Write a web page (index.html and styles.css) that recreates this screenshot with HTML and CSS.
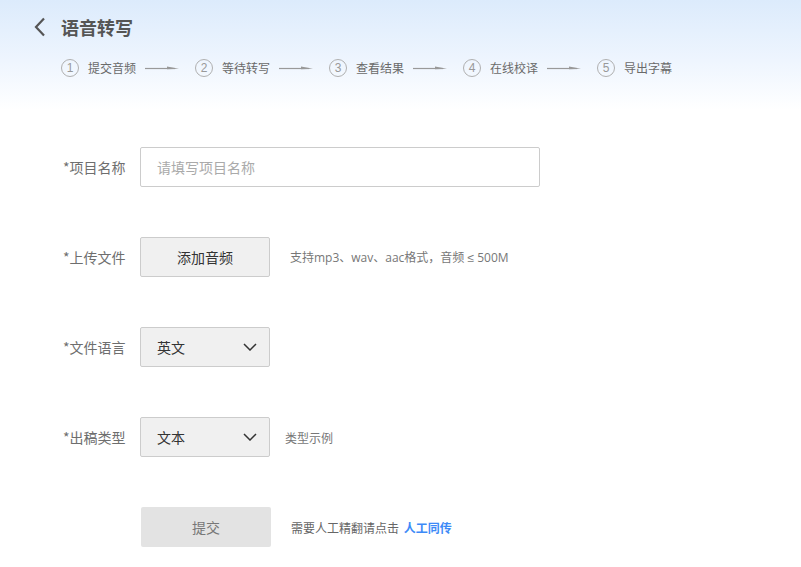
FILE: index.html
```html
<!DOCTYPE html>
<html lang="zh">
<head>
<meta charset="utf-8">
<link rel="stylesheet" href="styles.css">
</head>
<body>
<div class="header">
  <div class="title-row">
    <svg class="back" width="12" height="20" viewBox="0 0 12 20"><polyline points="10,1.5 2,10 10,18.5" fill="none" stroke="#555" stroke-width="2.2"/></svg>
    <h1 class="title">语音转写</h1>
  </div>
  <div class="steps">
    <div class="step"><span class="num">1</span><span class="step-text">提交音频</span></div>
    <svg class="arrow" width="34" height="6" viewBox="0 0 34 6"><line x1="0" y1="3.5" x2="30" y2="3.5" stroke="#999" stroke-width="1.2"/><polygon points="22,1.5 34,3.8 22,4.2" fill="#999"/></svg>
    <div class="step"><span class="num">2</span><span class="step-text">等待转写</span></div>
    <svg class="arrow" width="34" height="6" viewBox="0 0 34 6"><line x1="0" y1="3.5" x2="30" y2="3.5" stroke="#999" stroke-width="1.2"/><polygon points="22,1.5 34,3.8 22,4.2" fill="#999"/></svg>
    <div class="step"><span class="num">3</span><span class="step-text">查看结果</span></div>
    <svg class="arrow" width="34" height="6" viewBox="0 0 34 6"><line x1="0" y1="3.5" x2="30" y2="3.5" stroke="#999" stroke-width="1.2"/><polygon points="22,1.5 34,3.8 22,4.2" fill="#999"/></svg>
    <div class="step"><span class="num">4</span><span class="step-text">在线校译</span></div>
    <svg class="arrow" width="34" height="6" viewBox="0 0 34 6"><line x1="0" y1="3.5" x2="30" y2="3.5" stroke="#999" stroke-width="1.2"/><polygon points="22,1.5 34,3.8 22,4.2" fill="#999"/></svg>
    <div class="step"><span class="num">5</span><span class="step-text">导出字幕</span></div>
  </div>
</div>
<div class="form">
  <div class="row">
    <label class="label">*项目名称</label>
    <div class="input"><span class="placeholder">请填写项目名称</span></div>
  </div>
  <div class="row">
    <label class="label">*上传文件</label>
    <div class="btn">添加音频</div>
    <span class="hint hint-upload">支持mp3、wav、aac格式，音频 <span class="le">≤</span> 500M</span>
  </div>
  <div class="row">
    <label class="label">*文件语言</label>
    <div class="select"><span>英文</span><svg width="14" height="8" viewBox="0 0 14 8"><polyline points="1,1 7,7 13,1" fill="none" stroke="#333" stroke-width="1.5"/></svg></div>
  </div>
  <div class="row">
    <label class="label">*出稿类型</label>
    <div class="select"><span>文本</span><svg width="14" height="8" viewBox="0 0 14 8"><polyline points="1,1 7,7 13,1" fill="none" stroke="#333" stroke-width="1.5"/></svg></div>
    <span class="hint hint-type">类型示例</span>
  </div>
  <div class="row">
    <span class="label"></span>
    <div class="submit">提交</div>
    <span class="hint hint-submit">需要人工精翻请点击 <a class="link">人工同传</a></span>
  </div>
</div>
</body>
</html>
```
FILE: styles.css
```css
html, body {
  margin: 0;
  padding: 0;
  background: #fff;
  font-family: "Noto Sans CJK SC", "Microsoft YaHei", sans-serif;
  color: #333;
}
.header {
  height: 110px;
  background: linear-gradient(180deg, #dcebfc 0%, #eef5fe 55%, #ffffff 100%);
  padding-top: 17px;
  box-sizing: border-box;
}
.title-row {
  display: flex;
  align-items: center;
  padding-left: 34px;
  height: 20px;
}
.back {
  display: block;
  margin-right: 15px;
}
.title {
  margin: 0;
  font-size: 18px;
  font-weight: bold;
  color: #555;
  line-height: 20px;
}
.steps {
  display: flex;
  align-items: center;
  margin-top: 22px;
  padding-left: 61px;
  height: 18px;
}
.step {
  display: flex;
  align-items: center;
}
.num {
  width: 16px;
  height: 16px;
  border: 1px solid #b0b0b0;
  border-radius: 50%;
  font-size: 12px;
  line-height: 16px;
  text-align: center;
  color: #999;
  font-family: "Liberation Sans", sans-serif;
}
.step-text {
  margin-left: 9px;
  font-size: 12px;
  color: #6a6a6a;
  line-height: 18px;
}
.arrow {
  display: block;
  margin-left: 9px;
  margin-right: 16px;
}
.form {
  padding-top: 37px;
  display: flex;
  flex-direction: column;
  gap: 50px;
}
.row {
  display: flex;
  align-items: center;
  height: 40px;
}
.label {
  width: 77px;
  padding-left: 63px;
  font-size: 14px;
  color: #6e6e6e;
  box-sizing: content-box;
}
.input {
  width: 400px;
  height: 40px;
  box-sizing: border-box;
  border: 1px solid #ccc;
  border-radius: 2px;
  display: flex;
  align-items: center;
  padding-left: 16px;
}
.placeholder {
  font-size: 14px;
  color: #aaa;
}
.btn {
  width: 130px;
  height: 40px;
  box-sizing: border-box;
  border: 1px solid #ccc;
  border-radius: 2px;
  background: #f0f0f0;
  font-size: 14px;
  color: #333;
  display: flex;
  align-items: center;
  justify-content: center;
}
.select {
  width: 130px;
  height: 40px;
  box-sizing: border-box;
  border: 1px solid #ccc;
  border-radius: 2px;
  background: #f0f0f0;
  font-size: 14px;
  color: #333;
  display: flex;
  align-items: center;
  justify-content: space-between;
  padding-left: 16px;
  padding-right: 12px;
}
.select svg {
  display: block;
}
.hint {
  font-size: 12px;
  color: #777;
}
.hint-upload {
  margin-left: 20px;
  font-family: "Open Sans", "Noto Sans CJK SC", sans-serif;
}
.le {
  font-family: "Liberation Sans", sans-serif;
}
.hint-type {
  margin-left: 15px;
}
.submit {
  width: 130px;
  height: 40px;
  margin-left: 1px;
  border-radius: 2px;
  background: #e3e3e3;
  font-size: 14px;
  color: #777;
  display: flex;
  align-items: center;
  justify-content: center;
}
.hint-submit {
  margin-left: 20px;
  color: #666;
}
.link {
  color: #3d8af7;
  font-weight: bold;
  margin-left: 2px;
}
```
